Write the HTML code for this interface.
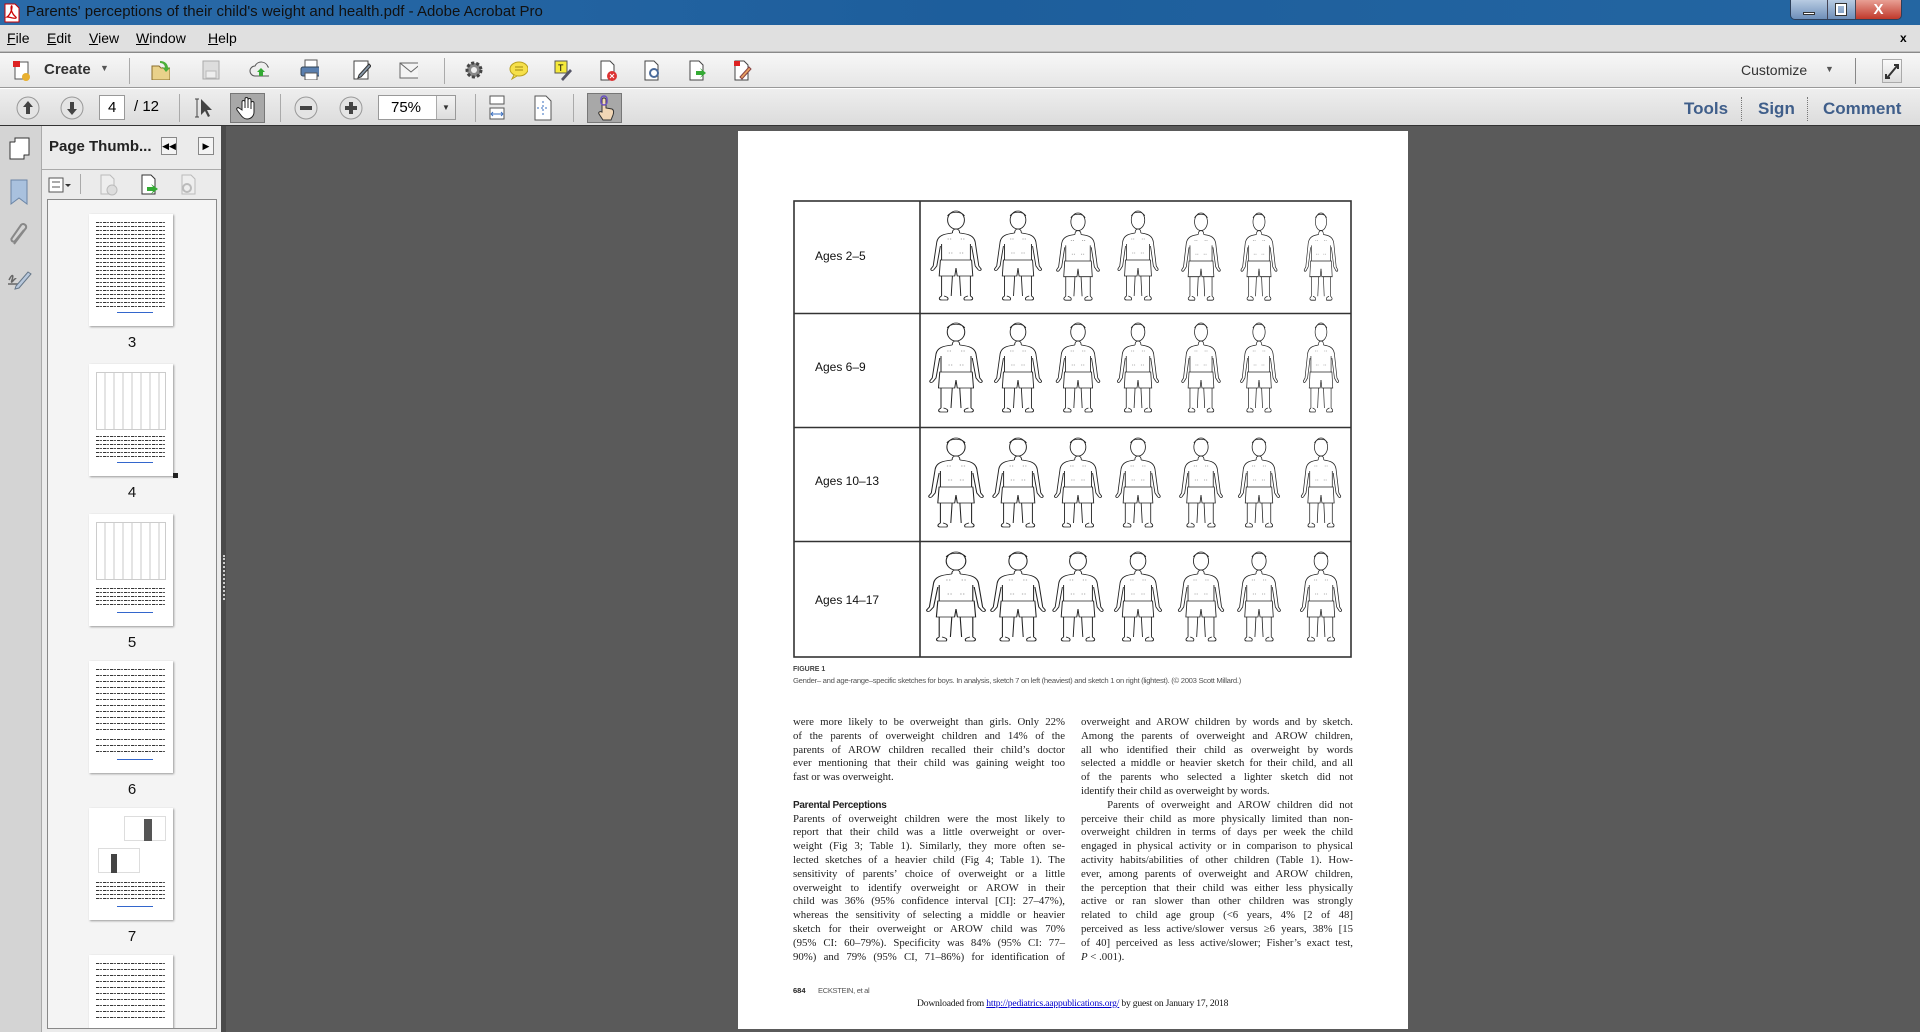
<!DOCTYPE html>
<html><head><meta charset="utf-8"><style>
*{margin:0;padding:0;box-sizing:border-box}
body{width:1920px;height:1032px;overflow:hidden;background:#5a5a5a;font-family:"Liberation Sans",sans-serif;position:relative}
.abs{position:absolute}
#title{left:0;top:0;width:1920px;height:25px;background:linear-gradient(90deg,#2a6aa8,#1d5e9c 50%,#2466a2);}
#title span{position:absolute;left:26px;top:3px;font-size:15px;color:#111}
#menu{left:0;top:25px;width:1920px;height:27px;background:#e0e0e0;border-bottom:1px solid #bdbdbd}
#menu span{position:absolute;top:5px;font-size:14px;color:#000}
#tb1{left:0;top:52px;width:1920px;height:36px;background:linear-gradient(#f7f7f7,#e6e6e6);border-top:1px solid #8a8a8a;border-bottom:1px solid #999}
#tb2{left:0;top:88px;width:1920px;height:38px;background:linear-gradient(#eee,#dcdcdc);border-top:1px solid #fff;border-bottom:1px solid #333}
.sep{position:absolute;width:1px;background:#aaa}
.ic{position:absolute;width:20px;height:22px}
.rt{position:absolute;top:10px;font-size:17px;font-weight:bold;color:#3f5e8a}
#strip{left:0;top:126px;width:42px;height:906px;background:#d4d4d4;border-right:1px solid #aaa}
#panel{left:42px;top:126px;width:179px;height:906px;background:#ebebeb}
#thumbs{left:47px;top:199px;width:170px;height:830px;background:#f4f4f4;border:1px solid #888;overflow:hidden}
.th{position:absolute;left:41px;width:84px;height:112px;background:#fff;box-shadow:1px 1px 2px #999}
.th i{position:absolute;left:7px;right:7px;height:1px;background:repeating-linear-gradient(90deg,#333 0 3px,#bbb 3px 4px,#555 4px 6px,#fff 6px 7px)}
.tl{position:absolute;left:0;width:168px;text-align:center;font-size:15px;color:#111}
#page{left:738px;top:131px;width:670px;height:898px;background:#fff}
.col{position:absolute;font-family:"Liberation Serif",serif;font-size:10.8px;color:#222;width:272px}
.col div{height:13.8px;line-height:13.8px;text-align:justify;text-align-last:justify;white-space:nowrap}
.col div.l{text-align-last:left}
.col div.h{font-family:"Liberation Sans",sans-serif;font-weight:bold;font-size:10px;text-align-last:left;letter-spacing:-.3px}
.lab{position:absolute;left:20px;font-size:12px;color:#111;font-family:"Liberation Sans",sans-serif}
</style></head><body>
<div id="title" class="abs"><svg class="abs" style="left:3px;top:3px" width="18" height="20"><path d="M2 1h10l4 4v14H2z" fill="#fff" stroke="#c00"/><path d="M4 14c3-2 5-7 5-10s-2 0 0 5 5 5 4 6-6-1-9-1z" fill="none" stroke="#c00" stroke-width="1.3"/></svg><span>Parents' perceptions of their child's weight and health.pdf - Adobe Acrobat Pro</span>
<div class="abs" style="left:1790px;top:0;width:112px;height:20px;border:1px solid #2c3f5a;border-top:none;border-radius:0 0 5px 5px;overflow:hidden;display:flex"><div style="width:36px;background:linear-gradient(#b8cbe2,#6e8fb9);position:relative"><div class="abs" style="left:12px;top:12px;width:12px;height:3px;background:#fff;border:1px solid #333"></div></div><div style="width:28px;background:linear-gradient(#b8cbe2,#6e8fb9);border-left:1px solid #445;position:relative"><div class="abs" style="left:8px;top:4px;width:10px;height:11px;border:2px solid #fff;outline:1px solid #333"></div></div><div style="flex:1;background:linear-gradient(#e8a095,#c0392b);border-left:1px solid #445;color:#fff;font-weight:bold;font-size:15px;text-align:center;line-height:19px">X</div></div></div>
<div id="menu" class="abs"><span style="left:7px"><u>F</u>ile</span><span style="left:47px"><u>E</u>dit</span><span style="left:89px"><u>V</u>iew</span><span style="left:136px"><u>W</u>indow</span><span style="left:208px"><u>H</u>elp</span><span style="left:1900px;font-size:12px;font-weight:bold;top:6px">x</span></div>
<div id="tb1" class="abs">
<svg class="ic" style="left:12px;top:6px" width="22" height="24"><rect x="3" y="3" width="13" height="17" fill="#fff" stroke="#555"/><rect x="1" y="2" width="7" height="6" fill="#d22"/><circle cx="14" cy="18" r="4" fill="#e8b030"/></svg>
<span class="abs" style="left:44px;top:8px;font-size:15px;font-weight:bold;color:#333">Create</span><span class="abs" style="left:100px;top:10px;font-size:9px;color:#555">▼</span>
<div class="sep" style="left:129px;top:5px;height:26px"></div>
<svg class="ic" style="left:150px;top:5px" width="22" height="24"><path d="M2 8h7l2 2h9v12H2z" fill="#e9d18a" stroke="#8a6d2a"/><path d="M10 3c5 0 8 3 8 7l3-1-5 5-4-5 3 1c0-3-2-5-5-5z" fill="#4caf3a"/></svg>
<svg class="ic" style="left:201px;top:6px" width="20" height="22"><rect x="2" y="2" width="16" height="18" fill="#ddd" stroke="#aaa"/><rect x="5" y="12" width="10" height="7" fill="#eee" stroke="#bbb"/></svg>
<svg class="ic" style="left:249px;top:6px" width="24" height="22"><path d="M6 17a5 5 0 010-10 7 7 0 0113 1 4 4 0 010 9z" fill="#eee" stroke="#555"/><path d="M12 9l-4 4h2v4h4v-4h2z" fill="#3a3"/></svg>
<svg class="ic" style="left:299px;top:5px" width="24" height="24"><rect x="6" y="2" width="12" height="7" fill="#fff" stroke="#555"/><rect x="2" y="9" width="20" height="9" rx="2" fill="#5a7fae" stroke="#345"/><rect x="6" y="15" width="12" height="7" fill="#fff" stroke="#555"/></svg>
<svg class="ic" style="left:351px;top:6px" width="22" height="22"><rect x="3" y="2" width="14" height="18" fill="#fff" stroke="#444"/><path d="M8 16l10-11 2 2-10 11-3 1z" fill="#89a" stroke="#333"/></svg>
<svg class="ic" style="left:398px;top:8px" width="26" height="20"><rect x="2" y="2" width="22" height="15" fill="#f4f4f4" stroke="#666"/><path d="M2 2l11 9 11-9" fill="none" stroke="#666"/></svg>
<div class="sep" style="left:444px;top:5px;height:26px"></div>
<svg class="ic" style="left:463px;top:6px" width="22" height="22"><circle cx="11" cy="11" r="7" fill="#888" stroke="#444" stroke-width="3" stroke-dasharray="3 2"/><circle cx="11" cy="11" r="3" fill="#eee"/></svg>
<svg class="ic" style="left:508px;top:6px" width="22" height="22"><ellipse cx="11" cy="10" rx="9" ry="7" fill="#f6e04a" stroke="#b8a020"/><path d="M6 16l-2 4 5-3" fill="#f6e04a" stroke="#b8a020"/><path d="M7 8h8M7 11h8" stroke="#a08a10"/></svg>
<svg class="ic" style="left:552px;top:6px" width="22" height="24"><rect x="3" y="2" width="12" height="12" fill="#f6ea3a" stroke="#555"/><text x="6" y="12" font-size="9" font-family="Liberation Sans">T</text><path d="M9 20l9-10 2 2-9 10z" fill="#556" /></svg>
<svg class="ic" style="left:598px;top:6px" width="22" height="24"><path d="M3 2h9l4 4v15H3z" fill="#fff" stroke="#444"/><circle cx="14" cy="17" r="5" fill="#d33"/><path d="M12 15l4 4M16 15l-4 4" stroke="#fff"/></svg>
<svg class="ic" style="left:642px;top:6px" width="22" height="24"><path d="M3 2h9l4 4v15H3z" fill="#fff" stroke="#444"/><circle cx="12" cy="14" r="4" fill="none" stroke="#4a6a9a" stroke-width="2"/></svg>
<svg class="ic" style="left:687px;top:6px" width="22" height="24"><path d="M3 2h9l4 4v15H3z" fill="#fff" stroke="#444"/><path d="M9 12h6l-2-3 6 5-6 5 2-3H9z" fill="#3a3"/></svg>
<svg class="ic" style="left:732px;top:6px" width="22" height="24"><path d="M3 2h9l4 4v15H3z" fill="#fff" stroke="#444"/><rect x="2" y="2" width="6" height="5" fill="#d22"/><path d="M8 18l9-10 2 2-9 10z" fill="#e8a060" stroke="#844"/></svg>
<span class="abs" style="left:1741px;top:9px;font-size:14px;color:#333">Customize</span><span class="abs" style="left:1825px;top:11px;font-size:9px;color:#555">▼</span>
<div class="sep" style="left:1855px;top:5px;height:26px;background:#888"></div>
<div class="abs" style="left:1882px;top:6px;width:20px;height:24px;background:linear-gradient(#fafafa,#ddd);border:1px solid #aaa"><svg width="18" height="22"><path d="M4 18l10-12M11 5h4v4M7 18H3v-4" stroke="#333" stroke-width="2" fill="none"/></svg></div>
</div>
<div id="tb2" class="abs">
<svg class="abs" style="left:15px;top:6px" width="26" height="26"><circle cx="13" cy="13" r="11" fill="#e4e4e4" stroke="#999"/><path d="M13 6l-5 6h3v7h4v-7h3z" fill="#444"/></svg>
<svg class="abs" style="left:59px;top:6px" width="26" height="26"><circle cx="13" cy="13" r="11" fill="#e4e4e4" stroke="#999"/><path d="M13 20l-5-6h3V7h4v7h3z" fill="#444"/></svg>
<div class="abs" style="left:99px;top:6px;width:26px;height:25px;background:#fff;border:1px solid #999;font-size:15px;line-height:23px;padding-left:8px">4</div>
<span class="abs" style="left:134px;top:9px;font-size:15px">/ 12</span>
<div class="sep" style="left:179px;top:5px;height:28px"></div>
<svg class="abs" style="left:193px;top:7px" width="20" height="24"><path d="M2 3h4M4 3v18M2 21h4" stroke="#444" fill="none"/><path d="M8 3v16l4-4 3 6 2-1-3-6h5z" fill="#444"/></svg>
<div class="abs" style="left:230px;top:4px;width:35px;height:30px;background:#a8a8a8;border:1px solid #777"><svg width="34" height="28"><path d="M11 16V8a1.5 1.5 0 013 0v6V5a1.5 1.5 0 013 0v9V6a1.5 1.5 0 013 0v9-6a1.5 1.5 0 013 0v9c0 4-3 7-7 7-3 0-5-2-7-5l-3-4c-1-2 1-3 2-2z" fill="#fff" stroke="#222"/></svg></div>
<div class="sep" style="left:280px;top:5px;height:28px"></div>
<svg class="abs" style="left:293px;top:6px" width="26" height="26"><circle cx="13" cy="13" r="11" fill="#e4e4e4" stroke="#999"/><rect x="7" y="11" width="12" height="4" fill="#444"/></svg>
<svg class="abs" style="left:338px;top:6px" width="26" height="26"><circle cx="13" cy="13" r="11" fill="#e4e4e4" stroke="#999"/><path d="M7 11h4V7h4v4h4v4h-4v4h-4v-4H7z" fill="#444"/></svg>
<div class="abs" style="left:378px;top:6px;width:78px;height:25px;background:#fff;border:1px solid #999;font-size:15px;line-height:23px;padding-left:12px">75%</div>
<div class="abs" style="left:436px;top:7px;width:19px;height:23px;background:linear-gradient(#f4f4f4,#ddd);border-left:1px solid #aaa;font-size:8px;text-align:center;line-height:23px;color:#333">▼</div>
<div class="sep" style="left:475px;top:5px;height:28px"></div>
<svg class="abs" style="left:486px;top:6px" width="22" height="26"><rect x="4" y="1" width="14" height="8" fill="#fff" stroke="#555"/><rect x="4" y="13" width="14" height="11" fill="#fff" stroke="#555"/><path d="M5 19h12M5 19l2-2M5 19l2 2M17 19l-2-2M17 19l-2 2" stroke="#3a6fbf" fill="none"/></svg>
<svg class="abs" style="left:532px;top:6px" width="22" height="26"><path d="M3 1h11l5 5v19H3z" fill="#fff" stroke="#555"/><path d="M11 6v14M5 13h12" stroke="#3a6fbf" stroke-dasharray="2 2"/></svg>
<div class="sep" style="left:573px;top:5px;height:28px"></div>
<div class="abs" style="left:587px;top:4px;width:35px;height:30px;background:#a8a8a8;border:1px solid #777"><svg width="34" height="28"><path d="M14 18V6a2 2 0 014 0v8l6 1c2 1 2 3 1 6l-2 5h-8l-4-6c-1-2 1-3 3-2z" fill="#f2d7b6" stroke="#333"/><rect x="13" y="2" width="6" height="9" rx="3" fill="none" stroke="#6a4fc0" stroke-width="1.5"/></svg></div>
<span class="rt" style="left:1684px">Tools</span><div class="abs" style="left:1741px;top:8px;height:24px;border-left:1px dotted #777"></div>
<span class="rt" style="left:1758px">Sign</span><div class="abs" style="left:1807px;top:8px;height:24px;border-left:1px dotted #777"></div>
<span class="rt" style="left:1823px">Comment</span>
</div>
<div id="strip" class="abs">
<svg class="abs" style="left:8px;top:10px" width="24" height="26"><rect x="2" y="6" width="14" height="17" fill="#fff" stroke="#333"/><path d="M7 6V2h14v17h-5" fill="#fff" stroke="#333"/></svg>
<svg class="abs" style="left:8px;top:52px" width="24" height="28"><path d="M3 2h16v24l-8-6-8 6z" fill="#a9c1de" stroke="#6b85a6"/></svg>
<svg class="abs" style="left:8px;top:96px" width="24" height="28"><path d="M6 22L18 6a3 3 0 00-5-3L4 16a2 2 0 003 3l9-11" fill="none" stroke="#888" stroke-width="2"/></svg>
<svg class="abs" style="left:6px;top:140px" width="26" height="24"><path d="M2 18h14M3 14c3-6 5-6 3 0s3-3 4-1" fill="none" stroke="#666" stroke-width="1.5"/><path d="M10 20l12-14 3 2-12 14-4 1z" fill="#b8c8dc" stroke="#678"/></svg>
</div>
<div id="panel" class="abs">
<div class="abs" style="left:0;top:0;width:179px;height:44px;border-bottom:1px solid #aaa"></div>
<span class="abs" style="left:7px;top:12px;font-size:15px;font-weight:bold;color:#222">Page Thumb...</span>
<div class="abs" style="left:119px;top:11px;width:16px;height:18px;border:1px solid #888;background:#f4f4f4;font-size:9px;text-align:center;line-height:16px">◀◀</div>
<div class="abs" style="left:156px;top:11px;width:16px;height:18px;border:1px solid #888;background:#f4f4f4;font-size:9px;text-align:center;line-height:16px">▶</div>
<svg class="abs" style="left:6px;top:50px" width="24" height="18"><rect x="1" y="2" width="14" height="14" fill="#fff" stroke="#555"/><path d="M4 6h8M4 11h8" stroke="#555"/><path d="M17 8h6l-3 3z" fill="#333"/></svg>
<div class="sep" style="left:38px;top:48px;height:20px"></div>
<svg class="abs" style="left:56px;top:48px" width="22" height="22"><path d="M3 1h9l4 4v15H3z" fill="#eee" stroke="#bbb"/><circle cx="14" cy="16" r="5" fill="#ddd" stroke="#bbb"/></svg>
<svg class="abs" style="left:97px;top:48px" width="22" height="22"><path d="M3 1h9l4 4v15H3z" fill="#fff" stroke="#333"/><path d="M8 13h6l-2-3 7 5-7 5 2-3H8z" fill="#3a3"/></svg>
<svg class="abs" style="left:135px;top:48px" width="22" height="22"><path d="M5 1h9l4 4v15H5z" fill="#eee" stroke="#bbb"/><circle cx="10" cy="14" r="4" fill="none" stroke="#bbb" stroke-width="2"/></svg>
</div>
<div class="abs" style="left:221px;top:126px;width:5px;height:906px;background:#4a4a4a"></div>
<div class="abs" style="left:223px;top:555px;height:45px;border-left:2px dotted #ccc"></div>
<div id="thumbs" class="abs">
<div class="th" style="top:14px"><i style="top:8px"></i><i style="top:12px"></i><i style="top:16px"></i><i style="top:20px"></i><i style="top:24px"></i><i style="top:28px"></i><i style="top:32px"></i><i style="top:36px"></i><i style="top:40px"></i><i style="top:44px"></i><i style="top:48px"></i><i style="top:52px"></i><i style="top:56px"></i><i style="top:60px"></i><i style="top:64px"></i><i style="top:68px"></i><i style="top:72px"></i><i style="top:76px"></i><i style="top:80px"></i><i style="top:84px"></i><i style="top:88px"></i><i style="top:92px"></i><i style="top:98px;left:28px;right:20px;background:#36c"></i></div>
<div class="tl" style="top:134px">3</div>
<div class="th" style="top:164px"><div class="abs" style="left:7px;top:8px;width:70px;height:58px;border:1px solid #ccc;background:repeating-linear-gradient(90deg,#fff 0 7px,#e4e4e4 7px 9px)"></div><i style="top:72px"></i><i style="top:76px"></i><i style="top:80px"></i><i style="top:84px"></i><i style="top:88px"></i><i style="top:92px"></i><i style="top:98px;left:28px;right:20px;background:#36c"></i></div>
<div class="abs" style="left:125px;top:273px;width:5px;height:5px;background:#222"></div>
<div class="tl" style="top:284px">4</div>
<div class="th" style="top:314px"><div class="abs" style="left:7px;top:8px;width:70px;height:58px;border:1px solid #ccc;background:repeating-linear-gradient(90deg,#fff 0 7px,#e4e4e4 7px 9px)"></div><i style="top:74px"></i><i style="top:78px"></i><i style="top:82px"></i><i style="top:86px"></i><i style="top:90px"></i><i style="top:98px;left:28px;right:20px;background:#36c"></i></div>
<div class="tl" style="top:434px">5</div>
<div class="th" style="top:461px"><i style="top:8px"></i><i style="top:14px"></i><i style="top:20px"></i><i style="top:26px"></i><i style="top:32px"></i><i style="top:38px"></i><i style="top:44px"></i><i style="top:50px"></i><i style="top:56px"></i><i style="top:62px"></i><i style="top:68px"></i><i style="top:78px"></i><i style="top:84px"></i><i style="top:90px"></i><i style="top:98px;left:28px;right:20px;background:#36c"></i></div>
<div class="tl" style="top:581px">6</div>
<div class="th" style="top:608px"><div class="abs" style="left:35px;top:8px;width:42px;height:25px;border:1px solid #ddd"></div><div class="abs" style="left:55px;top:11px;width:8px;height:22px;background:#555"></div><div class="abs" style="left:9px;top:40px;width:42px;height:25px;border:1px solid #ddd"></div><div class="abs" style="left:22px;top:46px;width:6px;height:19px;background:#444"></div><i style="top:74px"></i><i style="top:78px"></i><i style="top:82px"></i><i style="top:86px"></i><i style="top:90px"></i><i style="top:98px;left:28px;right:20px;background:#36c"></i></div>
<div class="tl" style="top:728px">7</div>
<div class="th" style="top:755px"><i style="top:8px"></i><i style="top:14px"></i><i style="top:20px"></i><i style="top:26px"></i><i style="top:32px"></i><i style="top:38px"></i><i style="top:44px"></i><i style="top:50px"></i><i style="top:56px"></i><i style="top:62px"></i></div>
</div>
<div id="page" class="abs">
<svg class="abs" style="left:55px;top:69px" width="560" height="458">
<defs>
<g id="half"><path d="M0 19c-2 0-3 1-3 4M-3 23c-8 1-12 3-13 9l-3 24 -2 3c0 2 2 2 3 0l2-3 3-20M-12 34l0 16" fill="none" stroke="#222" stroke-width=".8"/><path d="M0 50h-13l-1 16h13l1-8M-12 66l0 20M-3 66l-1 20M-12 86c-3 2-2 4 0 4h5c1-2 0-3-3-4" fill="none" stroke="#222" stroke-width=".8"/><path d="M-7 29h3M-6 43h4" stroke="#555" stroke-width=".5" stroke-dasharray="1 1"/></g>
<g id="boy"><ellipse cx="0" cy="10" rx="7" ry="9" fill="none" stroke="#222" stroke-width=".8"/><path d="M-7 6c2-5 12-5 14 0" fill="none" stroke="#222" stroke-width=".8"/><use href="#half"/><use href="#half" transform="scale(-1,1)"/></g>
</defs>
<rect x="1" y="1" width="557" height="456" fill="none" stroke="#333" stroke-width="1.6"/>
<path d="M127 1v456M1 113.5h557M1 227.5h557M1 341.5h557" stroke="#333" stroke-width="1.6"/>
<g transform="translate(0,10)">
<use href="#boy" transform="translate(163,0) scale(1.2,1)"/><use href="#boy" transform="translate(225,0) scale(1.12,1)"/><use href="#boy" transform="translate(285,2) scale(1.02,.98)"/><use href="#boy" transform="translate(345,0) scale(.96,1)"/><use href="#boy" transform="translate(408,2) scale(.92,.98)"/><use href="#boy" transform="translate(466,2) scale(.86,.98)"/><use href="#boy" transform="translate(528,2) scale(.8,.98)"/>
</g>
<g transform="translate(0,122)">
<use href="#boy" transform="translate(163,0) scale(1.25,1)"/><use href="#boy" transform="translate(225,0) scale(1.12,1)"/><use href="#boy" transform="translate(285,0) scale(1.04,1)"/><use href="#boy" transform="translate(345,0) scale(.98,1)"/><use href="#boy" transform="translate(408,0) scale(.92,1)"/><use href="#boy" transform="translate(466,0) scale(.88,1)"/><use href="#boy" transform="translate(528,0) scale(.84,1)"/>
</g>
<g transform="translate(0,237)">
<use href="#boy" transform="translate(163,0) scale(1.3,1)"/><use href="#boy" transform="translate(225,0) scale(1.2,1)"/><use href="#boy" transform="translate(285,0) scale(1.12,1)"/><use href="#boy" transform="translate(345,0) scale(1.06,1)"/><use href="#boy" transform="translate(408,0) scale(1.02,1)"/><use href="#boy" transform="translate(466,0) scale(.98,1)"/><use href="#boy" transform="translate(528,0) scale(.94,1)"/>
</g>
<g transform="translate(0,351)">
<use href="#boy" transform="translate(163,0) scale(1.4,1)"/><use href="#boy" transform="translate(225,0) scale(1.3,1)"/><use href="#boy" transform="translate(285,0) scale(1.2,1)"/><use href="#boy" transform="translate(345,0) scale(1.12,1)"/><use href="#boy" transform="translate(408,0) scale(1.08,1)"/><use href="#boy" transform="translate(466,0) scale(1.02,1)"/><use href="#boy" transform="translate(528,0) scale(.98,1)"/>
</g>
</svg>
<div class="lab" style="left:77px;top:118px">Ages 2–5</div>
<div class="lab" style="left:77px;top:229px">Ages 6–9</div>
<div class="lab" style="left:77px;top:343px">Ages 10–13</div>
<div class="lab" style="left:77px;top:462px">Ages 14–17</div>
<div class="abs" style="left:55px;top:535px;font-size:7px;color:#444;font-weight:bold">FIGURE 1</div>
<div class="abs" style="left:55px;top:545px;font-size:7.7px;color:#555;letter-spacing:-.3px;white-space:nowrap">Gender– and age-range–specific sketches for boys. In analysis, sketch 7 on left (heaviest) and sketch 1 on right (lightest). (© 2003 Scott Millard.)</div>
<div class="col" style="left:55px;top:585px">
<div>were more likely to be overweight than girls. Only 22%</div>
<div>of the parents of overweight children and 14% of the</div>
<div>parents of AROW children recalled their child’s doctor</div>
<div>ever mentioning that their child was gaining weight too</div>
<div class="l">fast or was overweight.</div>
<div></div>
<div class="h">Parental Perceptions</div>
<div>Parents of overweight children were the most likely to</div>
<div>report that their child was a little overweight or over-</div>
<div>weight (Fig 3; Table 1). Similarly, they more often se-</div>
<div>lected sketches of a heavier child (Fig 4; Table 1). The</div>
<div>sensitivity of parents’ choice of overweight or a little</div>
<div>overweight to identify overweight or AROW in their</div>
<div>child was 36% (95% confidence interval [CI]: 27–47%),</div>
<div>whereas the sensitivity of selecting a middle or heavier</div>
<div>sketch for their overweight or AROW child was 70%</div>
<div>(95% CI: 60–79%). Specificity was 84% (95% CI: 77–</div>
<div>90%) and 79% (95% CI, 71–86%) for identification of</div>
</div>
<div class="col" style="left:343px;top:585px">
<div>overweight and AROW children by words and by sketch.</div>
<div>Among the parents of overweight and AROW children,</div>
<div>all who identified their child as overweight by words</div>
<div>selected a middle or heavier sketch for their child, and all</div>
<div>of the parents who selected a lighter sketch did not</div>
<div class="l">identify their child as overweight by words.</div>
<div>&nbsp;&nbsp;&nbsp;&nbsp;Parents of overweight and AROW children did not</div>
<div>perceive their child as more physically limited than non-</div>
<div>overweight children in terms of days per week the child</div>
<div>engaged in physical activity or in comparison to physical</div>
<div>activity habits/abilities of other children (Table 1). How-</div>
<div>ever, among parents of overweight and AROW children,</div>
<div>the perception that their child was either less physically</div>
<div>active or ran slower than other children was strongly</div>
<div>related to child age group (&lt;6 years, 4% [2 of 48]</div>
<div>perceived as less active/slower versus ≥6 years, 38% [15</div>
<div>of 40] perceived as less active/slower; Fisher’s exact test,</div>
<div class="l"><i>P</i> &lt; .001).</div>
</div>
<div class="abs" style="left:55px;top:855px;font-size:7.5px;color:#222"><b>684</b>&nbsp;&nbsp;&nbsp;&nbsp;&nbsp;&nbsp;<span style="color:#555;letter-spacing:-.3px">ECKSTEIN, et al</span></div>
<div class="abs" style="left:179px;top:867px;font-size:9.6px;color:#111;font-family:'Liberation Serif',serif;letter-spacing:-.2px;white-space:nowrap">Downloaded from <span style="color:#00c;text-decoration:underline">http://pediatrics.aappublications.org/</span> by guest on January 17, 2018</div>
</div>
</body></html>
